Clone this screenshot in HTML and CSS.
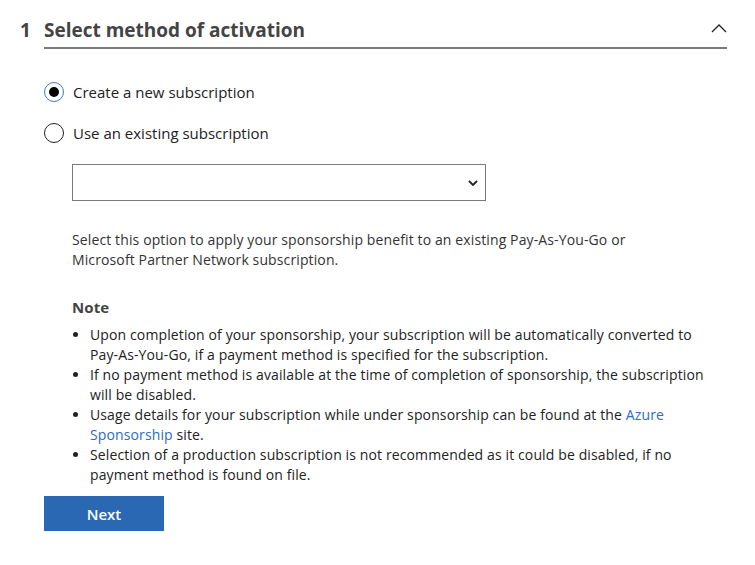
FILE: index.html
```html
<!DOCTYPE html>
<html>
<head>
<meta charset="utf-8">
<link rel="stylesheet" href="styles.css">
</head>
<body>
<section class="step">
  <div class="step-head">
    <span class="step-num">1</span>
    <div class="step-title">
      <h2>Select method of activation</h2>
      <svg class="chev-up" width="16" height="10" viewBox="0 0 16 10"><path d="M1 9 L8 2 L15 9" fill="none" stroke="#222" stroke-width="1.3"/></svg>
    </div>
  </div>
  <div class="step-body">
    <label class="radio"><span class="dot checked"></span>Create a new subscription</label>
    <label class="radio"><span class="dot"></span>Use an existing subscription</label>
    <div class="indent">
      <div class="select">
        <svg width="10" height="6" viewBox="0 0 10 6"><path d="M1 1 L5 5 L9 1" fill="none" stroke="#222" stroke-width="1.8"/></svg>
      </div>
      <p class="desc">Select this option to apply your sponsorship benefit to an existing Pay-As-You-Go or Microsoft Partner Network subscription.</p>
      <h3 class="note">Note</h3>
      <ul class="notes">
        <li>Upon completion of your sponsorship, your subscription will be automatically converted to Pay-As-You-Go, if a payment method is specified for the subscription.</li>
        <li>If no payment method is available at the time of completion of sponsorship, the subscription will be disabled.</li>
        <li>Usage details for your subscription while under sponsorship can be found at the <a href="#">Azure</a> <a href="#">Sponsorship</a> site.</li>
        <li>Selection of a production subscription is not recommended as it could be disabled, if no payment method is found on file.</li>
      </ul>
    </div>
    <button class="next">Next</button>
  </div>
</section>
</body>
</html>
```
FILE: styles.css
```css
html, body {
  margin: 0;
  padding: 0;
  background: #fff;
}
body {
  font-family: "Open Sans", "Noto Sans", sans-serif;
  color: #222;
  font-size: 14px;
}
.step {
  padding: 15px 28px 0 20px;
}
.step-head {
  display: flex;
  align-items: flex-start;
}
.step-num {
  width: 24px;
  font-size: 19px;
  font-weight: 700;
  color: #444;
  line-height: 30px;
}
.step-title {
  flex: 1;
  display: flex;
  justify-content: space-between;
  align-items: center;
  border-bottom: 2px solid #7a7a7a;
  height: 34px;
  box-sizing: border-box;
  padding-bottom: 3px;
}
.step-title h2 {
  margin: 0;
  font-size: 19px;
  font-weight: 700;
  color: #444;
  line-height: 30px;
}
.chev-up {
  margin-top: -4px;
}
.step-body {
  padding-left: 24px;
  padding-top: 33px;
}
.radio {
  display: flex;
  align-items: center;
  height: 20px;
  margin-bottom: 21px;
  font-size: 15px;
  color: #222;
}
.dot {
  width: 20px;
  height: 20px;
  box-sizing: border-box;
  border: 1.5px solid #222;
  border-radius: 50%;
  margin-right: 9px;
  display: flex;
  align-items: center;
  justify-content: center;
}
.dot.checked {
  border-color: #3a78c9;
}
.dot.checked::after {
  content: "";
  width: 10px;
  height: 10px;
  border-radius: 50%;
  background: #000;
}
.indent {
  padding-left: 28px;
  letter-spacing: 0.12px;
}
.select {
  width: 414px;
  height: 37px;
  box-sizing: border-box;
  border: 1px solid #7a7a7a;
  margin-top: 2px;
  display: flex;
  justify-content: flex-end;
  align-items: center;
  padding-right: 7px;
}
.desc {
  margin: 29px 0 0;
  max-width: 590px;
  line-height: 20px;
  color: #333;
}
.note {
  margin: 27px 0 0;
  font-size: 15px;
  font-weight: 700;
  color: #444;
  line-height: 20px;
}
.notes {
  margin: 8px 0 0;
  padding-left: 18px;
  max-width: 614px;
  line-height: 20px;
  color: #222;
}
.notes a {
  color: #2b6cc4;
  text-decoration: none;
}
.next {
  display: block;
  margin-top: 11px;
  width: 120px;
  height: 35px;
  border: 0;
  background: #2b68b3;
  color: #fff;
  font-family: inherit;
  font-size: 15px;
  font-weight: 600;
}
```
